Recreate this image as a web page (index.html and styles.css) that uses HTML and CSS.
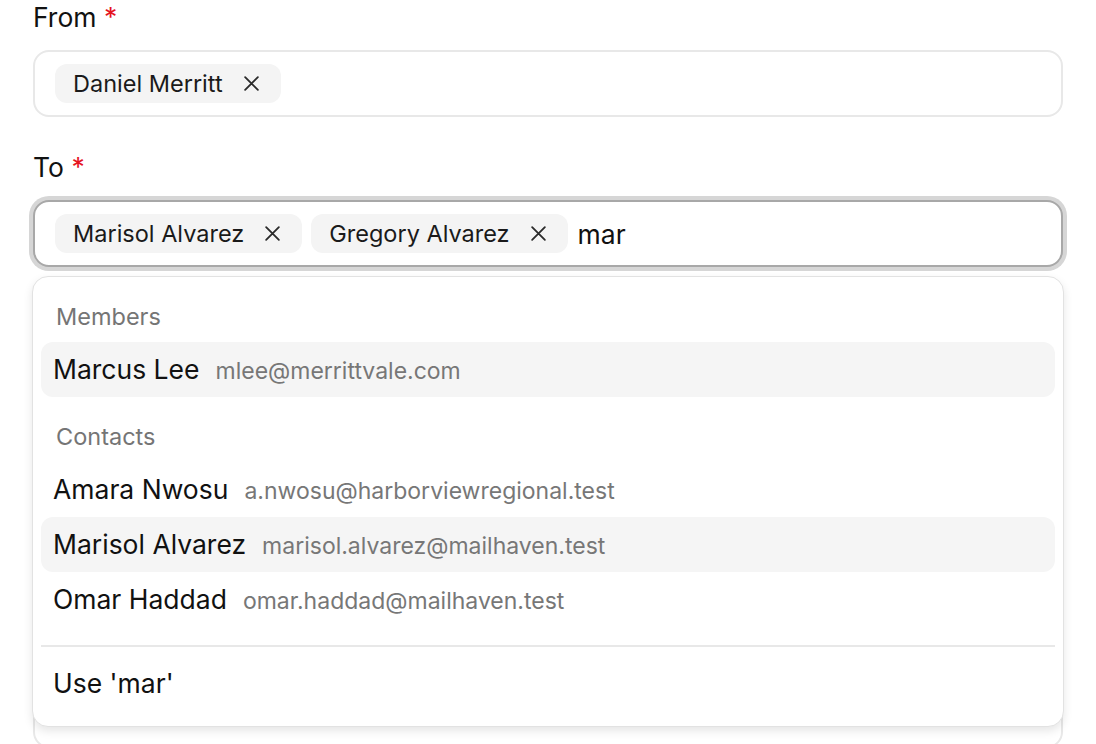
FILE: index.html
```html
<!DOCTYPE html>
<html lang="en">
<head>
    <meta charset="UTF-8">
    <meta name="viewport" content="width=device-width, initial-scale=1.0">
    <title>New Message</title>
    <link rel="stylesheet" href="styles.css">
</head>
<body>
    <form class="compose">
        <div class="field">
            <label class="field-label">From <span class="req">*</span></label>
            <div class="tag-input">
                <span class="tag">Daniel Merritt
                    <button type="button" class="tag-remove" aria-label="Remove">
                        <svg viewBox="0 0 16 16" width="17" height="17"><path d="M2 2l12 12M14 2L2 14" /></svg>
                    </button>
                </span>
            </div>
        </div>

        <div class="field field-open">
            <label class="field-label">To <span class="req">*</span></label>
            <div class="tag-input focused">
                <span class="tag">Marisol Alvarez
                    <button type="button" class="tag-remove" aria-label="Remove">
                        <svg viewBox="0 0 16 16" width="17" height="17"><path d="M2 2l12 12M14 2L2 14" /></svg>
                    </button>
                </span>
                <span class="tag">Gregory Alvarez
                    <button type="button" class="tag-remove" aria-label="Remove">
                        <svg viewBox="0 0 16 16" width="17" height="17"><path d="M2 2l12 12M14 2L2 14" /></svg>
                    </button>
                </span>
                <input type="text" class="tag-text" value="mar" />
            </div>

            <div class="menu">
                <div class="menu-group">Members</div>
                <div class="menu-item active">
                    <span class="item-name">Marcus Lee</span>
                    <span class="item-email">mlee@merrittvale.com</span>
                </div>

                <div class="menu-group gap">Contacts</div>
                <div class="menu-item">
                    <span class="item-name">Amara Nwosu</span>
                    <span class="item-email">a.nwosu@harborviewregional.test</span>
                </div>
                <div class="menu-item selected">
                    <span class="item-name">Marisol Alvarez</span>
                    <span class="item-email">marisol.alvarez@mailhaven.test</span>
                </div>
                <div class="menu-item">
                    <span class="item-name">Omar Haddad</span>
                    <span class="item-email">omar.haddad@mailhaven.test</span>
                </div>

                <div class="menu-sep"></div>
                <div class="menu-item">
                    <span class="item-name">Use 'mar'</span>
                </div>
            </div>
        </div>

        <!-- message body, mostly hidden under the open menu -->
        <div class="field">
            <div class="tag-input body-box"></div>
        </div>
    </form>
</body>
</html>
```

FILE: styles.css
```css
body {
    font-family: Inter, "Noto Sans", sans-serif;
    margin: 0;
    padding: 0;
    background-color: #fff;
    color: #111;
}

.compose {
    padding: 0 33px;
}

.field {
    margin-bottom: 33px;
}

.field-open {
    position: relative;
}

.field-label {
    display: block;
    font-size: 26.5px;
    line-height: 34px;
    margin-bottom: 16px;
    color: #111;
}

.req {
    color: #e5141f;
}

.tag-input {
    display: flex;
    align-items: center;
    gap: 10px;
    min-height: 39px;
    padding: 12px 20px;
    border: 2px solid #e8e8e8;
    border-radius: 16px;
    background: #fff;
}

.tag-input.focused {
    border-color: #a8a8a8;
    box-shadow: 0 0 0 4px #d6d6d6;
}

.body-box {
    min-height: 420px;
}

.tag {
    display: inline-flex;
    align-items: center;
    gap: 20px;
    height: 39px;
    padding: 0 21px 0 18px;
    border-radius: 12px;
    background-color: #f4f4f4;
    font-size: 23.5px;
    color: #1a1a1a;
}

.tag + .tag {
    margin-left: -1px;
}

.tag-remove {
    display: flex;
    padding: 0;
    border: none;
    background: none;
    color: #2a2a2a;
    cursor: pointer;
}

.tag-remove svg {
    fill: none;
    stroke: currentColor;
    stroke-width: 1.7;
    stroke-linecap: round;
}

.tag-text {
    flex: 1;
    min-width: 0;
    padding: 0;
    border: none;
    outline: none;
    font-family: inherit;
    font-size: 26.5px;
    color: #111;
    background: transparent;
}

.menu {
    position: absolute;
    top: 126px;
    left: -1px;
    right: -1px;
    padding: 8px 8px 15px;
    border: 1px solid #e2e2e2;
    border-radius: 16px;
    background: #fff;
    box-shadow: 0 4px 10px rgba(0, 0, 0, 0.1);
    z-index: 5;
}

.menu-group {
    padding: 18px 15px 11px;
    line-height: 28px;
    font-size: 23.5px;
    color: #757575;
}

.menu-group.gap {
    margin-top: 8px;
}

.menu-item {
    display: flex;
    align-items: baseline;
    gap: 16px;
    padding: 0 12px;
    height: 55px;
    line-height: 55px;
    border-radius: 12px;
}

.menu-item.active,
.menu-item.selected {
    background-color: #f5f5f5;
}

.item-name {
    font-size: 26.5px;
    color: #111;
}

.item-email {
    font-size: 23px;
    color: #777;
}

.menu-sep {
    height: 2px;
    margin: 18px 0 9px;
    background-color: #e8e8e8;
}
```
